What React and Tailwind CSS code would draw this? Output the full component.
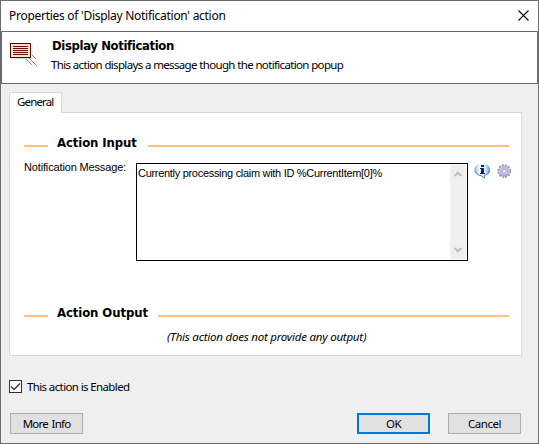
import React from "react";

function NotificationIcon() {
  return (
    <svg width="30" height="26" viewBox="0 0 30 26" className="block shrink-0">
      <path d="M3 16.5H23V3" fill="none" stroke="#e0e0e0" />
      <rect x="1.5" y="1.5" width="20" height="14" fill="#fae6c8" stroke="#600000" shapeRendering="crispEdges" />
      <path d="M4 4.5H19M4 6.5H19M4 8.5H19M4 10.5H19M4 12.5H19" stroke="#700b0b" shapeRendering="crispEdges" />
      <path d="M23.500 13.500l3 3M20.500 16.500l7 7M17.500 17.500l5 5" stroke="#94703f" strokeWidth="0.9" strokeLinecap="square" />
    </svg>
  );
}

function InfoIcon() {
  return (
    <svg width="17" height="17" viewBox="0 0 17 17" className="block">
      <defs>
        <linearGradient id="bubble" x2="1">
          <stop stopColor="#7fb0da" />
          <stop offset=".3" stopColor="#f2fbff" />
          <stop offset=".7" stopColor="#d3effc" />
          <stop offset="1" stopColor="#679ac9" />
        </linearGradient>
      </defs>
      <path d="M5 .5H11.500Q16 2.500 16 7T11 12.600V15.500L7.500 12.900Q.5 11.400.5 7T5 .5Z" fill="url(#bubble)" />
      <path d="M1 8Q2 11.500 5 12.200L7.500 12.700 10.500 15.200V12.700Q15 11.300 15.700 7.500" fill="none" stroke="#5285b8" />
      <path d="M7 2H10V4H7ZM6 5H10V10H11V11H6V10H7V6H6Z" fill="#10247e" shapeRendering="crispEdges" />
    </svg>
  );
}

function GearIcon() {
  return (
    <svg width="15" height="15" viewBox="0 0 15 15" className="block">
      <circle cx="7.2" cy="7.2" r="6" fill="none" stroke="#8c86bc" strokeWidth="1.7" strokeDasharray="2 1.142" />
      <circle cx="7.2" cy="7.2" r="4.2" fill="#fff" stroke="#bfbbdf" strokeWidth="3" />
      <circle cx="7.2" cy="7.2" r="2.1" fill="#f7f6ff" stroke="#8983b5" strokeWidth="0.9" />
      <path d="M3 10Q6 14 11 10.500" fill="none" stroke="#918cbd" strokeWidth="0.8" />
    </svg>
  );
}

function Section({ children, width }) {
  return (
    <div className="flex h-4 items-center">
      <div className="h-0.5 w-6 translate-y-px bg-[#ffc07d]" />
      <h2 className={`-mt-1 ml-[9px] shrink-0 whitespace-nowrap font-['DejaVu_Sans_Condensed','DejaVu_Sans',sans-serif] text-[13px] font-bold leading-4 tracking-[-0.1px] ${width}`}>
        {children}
      </h2>
      <div className="mr-3 h-0.5 flex-1 translate-y-px bg-[#ffc07d]" />
    </div>
  );
}

function Button({ children, className }) {
  return (
    <button className={`flex h-[21px] w-[73px] items-center justify-center bg-[#e1e1e1] text-[11.5px] leading-4 ${className}`}>
      {children}
    </button>
  );
}

export default function App() {
  return (
    <div className="flex h-[444px] w-[539px] flex-col overflow-hidden border border-[#6c6c6c] bg-[#efefef] font-['Noto_Sans',sans-serif] text-black">
      <header className="flex h-[30px] shrink-0 items-center justify-between bg-white pl-2 pr-[9px]">
        <h1 className="whitespace-nowrap text-[12px] leading-4 tracking-[-0.28px]">Properties of 'Display Notification' action</h1>
        <svg width="11" height="11" viewBox="0 0 11 11" className="-mt-0.5"><path d="M.5.5l10 10M10.500.5l-10 10" stroke="#000" strokeWidth="1.1" /></svg>
      </header>
      <section className="flex h-[53px] shrink-0 border border-[#6a6a6a] bg-white pl-[7px] pt-[10px]">
        <NotificationIcon />
        <div className="ml-[13px] whitespace-nowrap">
          <h2 className="-mt-1 font-['DejaVu_Sans_Condensed','DejaVu_Sans',sans-serif] text-[13px] font-bold leading-4 tracking-[-0.38px]">Display Notification</h2>
          <p className="-ml-px mt-[3px] text-[11.5px] leading-4 tracking-[-0.66px] [word-spacing:0.1px]">This action displays a message though the notification popup</p>
        </div>
      </section>
      <main className="pl-2 pt-2">
        <div className="relative z-10 flex h-[21px] w-[53px] items-center border border-b-0 border-[#d9d9d9] bg-white pb-0.5 pl-[7px] text-[11.5px] leading-4 tracking-[-0.85px]">General</div>
        <div className="-mt-px h-[244px] w-[513px] border border-[#d9d9d9] bg-white pl-[14px] pt-[24px]">
          <Section width="w-[91px]">Action Input</Section>
          <div className="mt-[10px] flex h-[98px]">
            <label className="-mt-px w-28 shrink-0 whitespace-nowrap font-['Liberation_Sans',sans-serif] text-[11px] leading-[10px] tracking-[-0.15px]">Notification Message:</label>
            <div className="flex w-[332px] shrink-0 border border-black bg-white p-px">
              <div className="flex-1 whitespace-nowrap pt-0.5 font-['Liberation_Sans',sans-serif] text-[11px] leading-3 tracking-[-0.3px]">Currently processing claim with ID %CurrentItem[0]%</div>
              <div className="flex w-4 flex-col items-center justify-between bg-[#efefef] py-1.5 text-[#bcbcbc]">
                <svg width="8" height="6" viewBox="0 0 8 6"><path d="M.5 5L4 1.500 7.500 5" fill="none" stroke="currentColor" strokeWidth="1.8" /></svg>
                <svg width="8" height="6" viewBox="0 0 8 6"><path d="M.5 1L4 4.500 7.500 1" fill="none" stroke="currentColor" strokeWidth="1.8" /></svg>
              </div>
            </div>
            <div className="ml-1.5 flex gap-1.5"><InfoIcon /><div className="pt-px"><GearIcon /></div></div>
          </div>
          <div className="mt-[46px]"><Section width="w-[101px]">Action Output</Section></div>
          <p className="mt-1.5 whitespace-nowrap pl-[143px] text-[11.5px] italic leading-4 tracking-[-0.22px]">(This action does not provide any output)</p>
        </div>
        <label className="mt-[22px] flex h-[17px] items-center text-[11.5px] leading-4 tracking-[-0.62px]">
          <span className="mr-[5px] flex size-[13px] items-center justify-center border border-[#303030] bg-white">
            <svg width="11" height="11" viewBox="0 0 11 11"><path d="M1 5.500l3 3 6-6" fill="none" stroke="#333" strokeWidth="1.3" /></svg>
          </span>
          This action is Enabled
        </label>
      </main>
      <footer className="mt-[18px] flex pl-[9px]">
        <Button className="border border-[#adadad] tracking-[-0.8px] [word-spacing:1.5px]">More Info</Button>
        <Button className="ml-[274px] border-2 border-[#0078d7] tracking-[-0.5px]">OK</Button>
        <Button className="ml-[18px] border border-[#adadad] tracking-[-0.5px]">Cancel</Button>
      </footer>
    </div>
  );
}
